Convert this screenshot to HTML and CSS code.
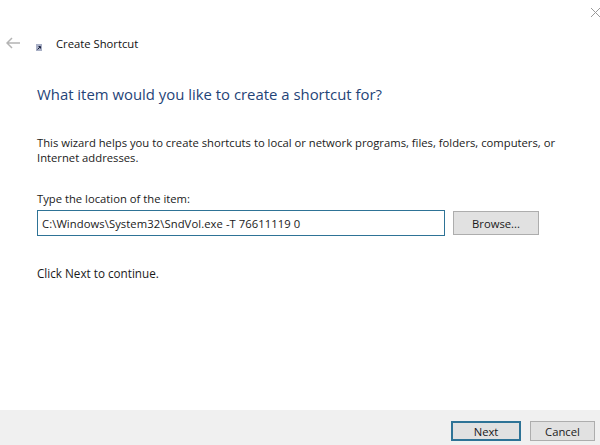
FILE: index.html
```html
<!DOCTYPE html>
<html lang="en">
<head>
<meta charset="utf-8">
<title>Create Shortcut</title>
<link rel="stylesheet" href="styles.css">
</head>
<body>
<div class="wizard">
  <svg class="close" width="9" height="9" viewBox="0 0 9 9"><path d="M0 0L9 9M9 0L0 9" stroke="#9a9a9a" stroke-width="1" fill="none"/></svg>
  <header class="titlebar">
    <svg class="back" width="14" height="12" viewBox="0 0 14 12"><path d="M6 1L1 6L6 11M1 6H14" stroke="#b4b4b4" stroke-width="1.5" fill="none"/></svg>
    <svg class="appicon" width="6" height="7" viewBox="0 0 6 7"><rect width="6" height="7" fill="#a9b0c6"/><path d="M1.5 5.5L4 3M2.5 2.5H4.5V4.5" stroke="#1c2340" stroke-width="1" fill="none"/></svg>
    <span class="title">Create Shortcut</span>
  </header>
  <main class="content">
    <h1 class="heading">What item would you like to create a shortcut for?</h1>
    <p class="intro">This wizard helps you to create shortcuts to local or network programs, files, folders, computers, or Internet addresses.</p>
    <label class="label" for="loc">Type the location of the item:</label>
    <div class="row">
      <input class="location" id="loc" type="text" value="C:\Windows\System32\SndVol.exe -T 76611119 0">
      <button class="btn browse" type="button">Browse...</button>
    </div>
    <p class="hint">Click Next to continue.</p>
  </main>
  <footer class="footer">
    <button class="btn next" type="button">Next</button>
    <button class="btn cancel" type="button">Cancel</button>
  </footer>
</div>
</body>
</html>
```
FILE: styles.css
```css
* { box-sizing: border-box; }
html, body { margin: 0; padding: 0; }
body {
  width: 600px;
  height: 445px;
  overflow: hidden;
  background: #fff;
  font-family: "Open Sans", "Noto Sans", sans-serif;
  font-size: 11.25px;
  color: #1a1a1a;
}
.wizard {
  position: relative;
  width: 600px;
  height: 445px;
  display: flex;
  flex-direction: column;
}
.close { position: absolute; top: 8px; right: 0; }
.titlebar {
  display: flex;
  align-items: flex-start;
  height: 84px;
  padding: 37px 0 0 6px;
}
.back { margin-right: 16px; }
.appicon { margin-top: 7px; margin-right: 14px; }
.title { font-size: 11.25px; line-height: 14px; color: #111; }
.content { flex: 1; padding: 0 0 0 37px; }
.heading {
  margin: 0;
  font-size: 14.9px;
  font-weight: 400;
  line-height: 20px;
  color: #1f4478;
}
.intro {
  margin: 31px 0 0;
  width: 530px;
  line-height: 15px;
}
.label { display: block; margin-top: 26px; line-height: 15px; }
.row { display: flex; align-items: center; margin-top: 4px; }
.location {
  width: 408px;
  height: 26px;
  padding: 0 4px;
  border: 1px solid #2e7396;
  border-radius: 0;
  outline: 0;
  background: #fff;
  font: inherit;
  letter-spacing: 0.07px;
  color: #1a1a1a;
}
.btn {
  height: 24px;
  padding: 0;
  border: 1px solid #adadad;
  border-radius: 0;
  background: #e1e1e1;
  font: inherit;
  color: #1a1a1a;
}
.browse { width: 86px; margin-left: 8px; }
.hint { margin: 30px 0 0; line-height: 15px; font-size: 11.7px; }
.footer {
  display: flex;
  justify-content: flex-end;
  gap: 9px;
  height: 35px;
  padding: 11px 5px 0 0;
  background: #f0f0f0;
}
.next { width: 70px; height: 20px; border: 2px solid #2e7396; }
.cancel { width: 65px; height: 20px; }
```
